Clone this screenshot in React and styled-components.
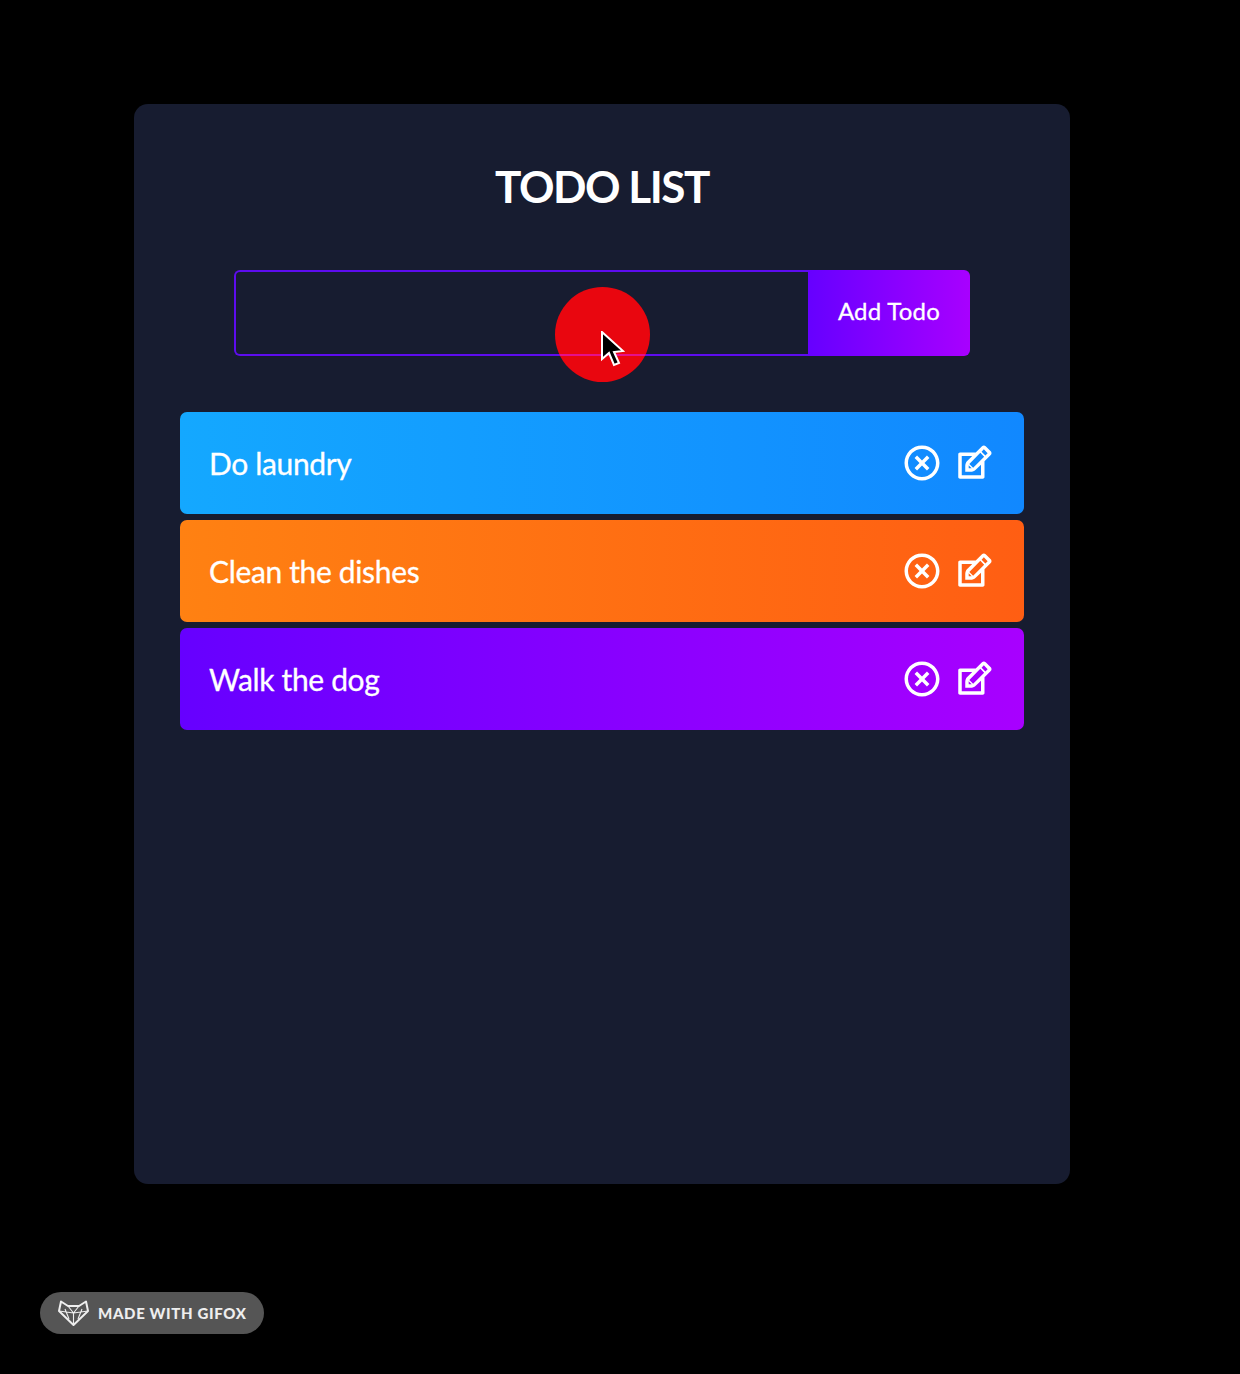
import React from 'react';
import styled, { createGlobalStyle } from 'styled-components';
import { RiCloseCircleLine } from 'react-icons/ri';
import { TiEdit } from 'react-icons/ti';

const Global = createGlobalStyle`
  html, body { margin: 0; padding: 0; background: #000; }
  body { font-family: "Lato", "Open Sans", "Liberation Sans", sans-serif; }
`;

const Page = styled.div`
  position: relative;
  width: 1240px;
  height: 1374px;
  padding: 104px 0 0 134px;
  box-sizing: border-box;
  background: #000;
`;

const Card = styled.main`
  width: 936px;
  height: 1080px;
  box-sizing: border-box;
  background: #171c30;
  border-radius: 14px;
  padding: 54px 46px 0;
  display: flex;
  flex-direction: column;
  align-items: center;
`;

const Title = styled.h1`
  margin: 0;
  height: 56px;
  line-height: 56px;
  font-size: 44px;
  font-weight: 700;
  letter-spacing: -1.45px;
  color: #fff;
  text-align: center;
`;

const Form = styled.form`
  display: flex;
  margin: 56px 0 56px;
  width: 736px;
  height: 86px;
`;

const Input = styled.input`
  width: 574px;
  height: 86px;
  box-sizing: border-box;
  border: 2px solid #5d0cee;
  border-right: 0;
  border-radius: 6px 0 0 6px;
  background: transparent;
  outline: none;
  color: #fff;
`;

const AddButton = styled.button`
  width: 162px;
  height: 86px;
  border: 0;
  border-radius: 0 6px 6px 0;
  background: linear-gradient(90deg, #6600ff 0%, #a800ff 100%);
  color: #fff;
  font: 400 24px "Lato", "Open Sans", sans-serif;
  letter-spacing: 0.25px;
  -webkit-text-stroke: 0.3px #fff;
  padding: 0 0 6px;
`;

const List = styled.ul`
  list-style: none;
  margin: 0;
  padding: 0;
  width: 844px;
  display: flex;
  flex-direction: column;
  gap: 6px;
`;

const gradients = {
  blue: 'linear-gradient(90deg, #14a8ff 0%, #1188ff 100%)',
  orange: 'linear-gradient(90deg, #ff8112 0%, #ff5e13 100%)',
  purple: 'linear-gradient(90deg, #6600ff 0%, #a800ff 100%)',
};

const Row = styled.li`
  height: 102px;
  box-sizing: border-box;
  border-radius: 7px;
  padding: 0 29px 0 29px;
  display: flex;
  align-items: center;
  justify-content: space-between;
  background: ${(p) => gradients[p.$tone]};
  color: #fff;
  font-size: 30px;
  letter-spacing: -0.35px;
  -webkit-text-stroke: 0.3px #fff;
`;

const Icons = styled.div`
  display: flex;
  align-items: center;
  gap: 10px;
  font-size: 42px;
  color: #fff;
  svg { display: block; }
`;

const Pointer = styled.div`
  position: absolute;
  left: 555px;
  top: 287px;
  width: 95px;
  height: 95px;
  border-radius: 50%;
  overflow: hidden;
  background: #e9060f;
  svg { position: absolute; left: 46px; top: 44px; }
`;

const LineThrough = styled.div`
  position: absolute;
  left: 0;
  right: 0;
  top: 67px;
  height: 2px;
  background: #e5108c;
`;

const Badge = styled.div`
  position: absolute;
  left: 40px;
  top: 1292px;
  width: 224px;
  height: 42px;
  border-radius: 21px;
  background: #555;
  display: flex;
  align-items: center;
  gap: 9px;
  padding-left: 18px;
  box-sizing: border-box;
  color: #eee;
  font: 900 15px "Lato", "Open Sans", sans-serif;
  letter-spacing: 0.65px;
`;

const Fox = () => (
  <svg width="31" height="26" viewBox="0 0 31 26" fill="none" stroke="#eee" strokeWidth="2" strokeLinejoin="round">
    <path d="M3 1.5 L10 6 H21 L28 1.5 L30 11 L15.5 25 L1 11 Z" />
    <path d="M10 6 L15.5 13 L21 6 M1 11 L15.5 13 L30 11 M15.5 13 V25 M7 9 L11 19 M24 9 L20 19" strokeWidth="1.1" />
  </svg>
);

const Cursor = () => (
  <svg width="24" height="36" viewBox="0 0 24 36">
    <path d="M1 1 L1 28 L8 22 L13 34 L18 32 L13 21 L22 20 Z" fill="#000" stroke="#fff" strokeWidth="2" />
  </svg>
);

const todos = [
  { id: 1, text: 'Do laundry', tone: 'blue' },
  { id: 2, text: 'Clean the dishes', tone: 'orange' },
  { id: 3, text: 'Walk the dog', tone: 'purple' },
];

export default function App() {
  return (
    <Page>
      <Global />
      <Card>
        <Title>TODO LIST</Title>
        <Form onSubmit={(e) => e.preventDefault()}>
          <Input />
          <AddButton type="button">Add Todo</AddButton>
        </Form>
        <List>
          {todos.map((t) => (
            <Row key={t.id} $tone={t.tone}>
              <span>{t.text}</span>
              <Icons>
                <RiCloseCircleLine />
                <TiEdit />
              </Icons>
            </Row>
          ))}
        </List>
      </Card>
      <Pointer><LineThrough /><Cursor /></Pointer>
      <Badge><Fox /><span>MADE WITH GIFOX</span></Badge>
    </Page>
  );
}
